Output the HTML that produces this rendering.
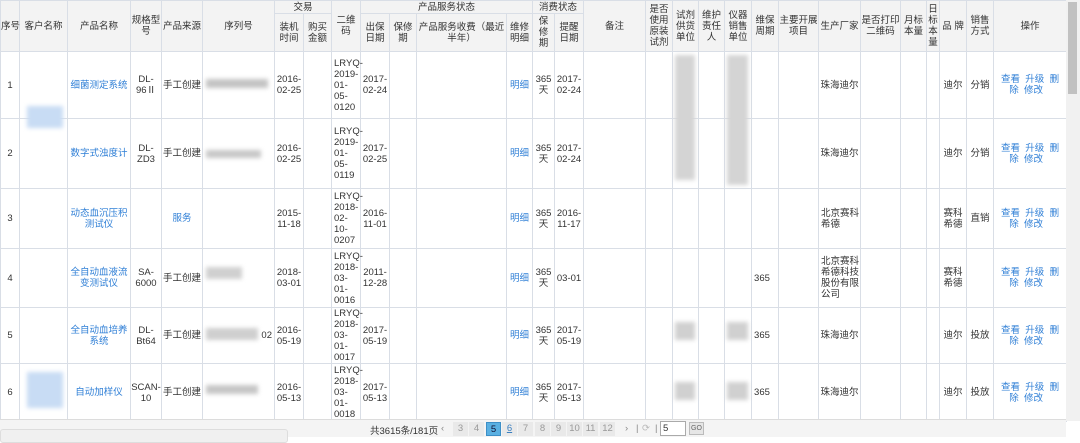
<!DOCTYPE html>
<html><head><meta charset="utf-8"><style>
*{margin:0;padding:0;box-sizing:border-box}
body{width:1080px;height:443px;overflow:hidden;background:#fff;font-family:"Liberation Sans","Noto Sans CJK SC",sans-serif;font-size:9.5px;color:#333;position:relative}
table{position:absolute;left:0;top:0;border-collapse:collapse;table-layout:fixed;width:1066px}
td,th{border:1px solid #d9dee6;text-align:center;vertical-align:middle;font-weight:normal;line-height:11px;padding:0;white-space:nowrap;font-size:9.5px}
th{background:#f3f3f3;color:#333}
td.l{text-align:left;padding-left:2px}
a{color:#2f7fd6;text-decoration:none}
.b{position:absolute;filter:blur(2px)}
.sb{position:absolute;left:1066px;top:0;width:14px;height:421px;background:#f1f1f1}
.sb i{position:absolute;left:2px;top:2px;width:9px;height:92px;background:#c1c1c1}
.pg{position:absolute;left:0;top:419px;width:1066px;height:18px;background:#f4f4f4;border-top:1px solid #dcdcdc}
.pg span{position:absolute;top:3px;font-size:9.5px;color:#333}
.pg .n{width:15px;height:14px;top:2px;background:#e9e9e9;color:#999;text-align:center;line-height:14px}
.pg .c{background:#5ab0e2;color:#113;border:1px solid #3d8fc7}
.bot{position:absolute;left:0;top:429px;width:288px;height:14px;background:#f0f0f0;border:1px solid #ddd;border-radius:3px}
</style></head><body>
<table>
<colgroup>
<col style="width:19px"><col style="width:48px"><col style="width:63px"><col style="width:31px"><col style="width:41px"><col style="width:72px"><col style="width:29px"><col style="width:28px"><col style="width:29px"><col style="width:29px"><col style="width:27px"><col style="width:90px"><col style="width:26px"><col style="width:22px"><col style="width:29px"><col style="width:62px"><col style="width:27px"><col style="width:26px"><col style="width:26px"><col style="width:27px"><col style="width:27px"><col style="width:40px"><col style="width:42px"><col style="width:40px"><col style="width:26px"><col style="width:13px"><col style="width:27px"><col style="width:27px"><col style="width:73px">
</colgroup>
<tr style="height:13px">
<th rowspan="2">序号</th><th rowspan="2">客户名称</th><th rowspan="2">产品名称</th><th rowspan="2">规格型<br>号</th><th rowspan="2">产品来源</th><th rowspan="2">序列号</th>
<th colspan="2">交易</th><th rowspan="2">二维<br>码</th><th colspan="4">产品服务状态</th><th colspan="2">消费状态</th>
<th rowspan="2">备注</th><th rowspan="2">是否<br>使用<br>原装<br>试剂</th><th rowspan="2">试剂<br>供货<br>单位</th><th rowspan="2">维护<br>责任<br>人</th><th rowspan="2">仪器<br>销售<br>单位</th><th rowspan="2">维保<br>周期</th><th rowspan="2">主要开展<br>项目</th><th rowspan="2">生产厂家</th><th rowspan="2">是否打印<br>二维码</th><th rowspan="2">月标<br>本量</th><th rowspan="2">日<br>标<br>本<br>量</th><th rowspan="2">品 牌</th><th rowspan="2">销售<br>方式</th><th rowspan="2">操作</th>
</tr>
<tr style="height:38px">
<th>装机<br>时间</th><th>购买<br>金额</th><th>出保<br>日期</th><th>保修<br>期</th><th>产品服务收费（最近<br>半年）</th><th>维修<br>明细</th><th>保<br>修<br>期</th><th>提醒<br>日期</th>
</tr>
<tr style="height:67px"><td>1</td><td></td><td><a>细菌测定系统</a></td><td>DL-<br>96Ⅱ</td><td>手工创建</td><td></td><td>2016-<br>02-25</td><td></td><td class="l">LRYQ-<br>2019-<br>01-<br>05-<br>0120</td><td>2017-<br>02-24</td><td></td><td></td><td><a>明细</a></td><td>365<br>天</td><td>2017-<br>02-24</td><td></td><td></td><td></td><td></td><td></td><td></td><td></td><td>珠海迪尔</td><td></td><td></td><td></td><td>迪尔</td><td>分销</td><td><a>查看 &nbsp;升级 &nbsp;删<br>除 &nbsp;修改&nbsp;&nbsp;&nbsp;</a></td></tr>
<tr style="height:70px"><td>2</td><td></td><td><a>数字式浊度计</a></td><td>DL-<br>ZD3</td><td>手工创建</td><td></td><td>2016-<br>02-25</td><td></td><td class="l">LRYQ-<br>2019-<br>01-<br>05-<br>0119</td><td>2017-<br>02-25</td><td></td><td></td><td><a>明细</a></td><td>365<br>天</td><td>2017-<br>02-24</td><td></td><td></td><td></td><td></td><td></td><td></td><td></td><td>珠海迪尔</td><td></td><td></td><td></td><td>迪尔</td><td>分销</td><td><a>查看 &nbsp;升级 &nbsp;删<br>除 &nbsp;修改&nbsp;&nbsp;&nbsp;</a></td></tr>
<tr style="height:60px"><td>3</td><td></td><td><a>动态血沉压积<br>测试仪</a></td><td></td><td><a>服务</a></td><td></td><td>2015-<br>11-18</td><td></td><td class="l">LRYQ-<br>2018-<br>02-<br>10-<br>0207</td><td>2016-<br>11-01</td><td></td><td></td><td><a>明细</a></td><td>365<br>天</td><td>2016-<br>11-17</td><td></td><td></td><td></td><td></td><td></td><td></td><td></td><td class="l">北京赛科<br>希德</td><td></td><td></td><td></td><td>赛科<br>希德</td><td>直销</td><td><a>查看 &nbsp;升级 &nbsp;删<br>除 &nbsp;修改&nbsp;&nbsp;&nbsp;</a></td></tr>
<tr style="height:59px"><td>4</td><td></td><td><a>全自动血液流<br>变测试仪</a></td><td>SA-<br>6000</td><td>手工创建</td><td></td><td>2018-<br>03-01</td><td></td><td class="l">LRYQ-<br>2018-<br>03-<br>01-<br>0016</td><td>2011-<br>12-28</td><td></td><td></td><td><a>明细</a></td><td>365<br>天</td><td>03-01</td><td></td><td></td><td></td><td></td><td></td><td class="l">365</td><td></td><td class="l">北京赛科<br>希德科技<br>股份有限<br>公司</td><td></td><td></td><td></td><td>赛科<br>希德</td><td></td><td><a>查看 &nbsp;升级 &nbsp;删<br>除 &nbsp;修改&nbsp;&nbsp;&nbsp;</a></td></tr>
<tr style="height:56px"><td>5</td><td></td><td><a>全自动血培养<br>系统</a></td><td>DL-<br>Bt64</td><td>手工创建</td><td style="text-align:right;padding-right:2px">02</td><td>2016-<br>05-19</td><td></td><td class="l">LRYQ-<br>2018-<br>03-<br>01-<br>0017</td><td>2017-<br>05-19</td><td></td><td></td><td><a>明细</a></td><td>365<br>天</td><td>2017-<br>05-19</td><td></td><td></td><td></td><td></td><td></td><td class="l">365</td><td></td><td>珠海迪尔</td><td></td><td></td><td></td><td>迪尔</td><td>投放</td><td><a>查看 &nbsp;升级 &nbsp;删<br>除 &nbsp;修改&nbsp;&nbsp;&nbsp;</a></td></tr>
<tr style="height:58px"><td>6</td><td></td><td><a>自动加样仪</a></td><td>SCAN-<br>10</td><td>手工创建</td><td></td><td>2016-<br>05-13</td><td></td><td class="l">LRYQ-<br>2018-<br>03-<br>01-<br>0018</td><td>2017-<br>05-13</td><td></td><td></td><td><a>明细</a></td><td>365<br>天</td><td>2017-<br>05-13</td><td></td><td></td><td></td><td></td><td></td><td class="l">365</td><td></td><td>珠海迪尔</td><td></td><td></td><td></td><td>迪尔</td><td>投放</td><td><a>查看 &nbsp;升级 &nbsp;删<br>除 &nbsp;修改&nbsp;&nbsp;&nbsp;</a></td></tr>
</table>
<div class="b" style="left:27px;top:106px;width:36px;height:22px;background:#c8dcf4"></div>
<div class="b" style="left:27px;top:372px;width:36px;height:36px;background:#c8dcf4"></div>
<div class="b" style="left:206px;top:79px;width:62px;height:9px;background:#c4c4c4"></div>
<div class="b" style="left:206px;top:150px;width:55px;height:8px;background:#c8c8c8"></div>
<div class="b" style="left:206px;top:267px;width:36px;height:12px;background:#d0d0d0"></div>
<div class="b" style="left:206px;top:328px;width:52px;height:12px;background:#cfcfcf"></div>
<div class="b" style="left:206px;top:385px;width:52px;height:9px;background:#c6c6c6"></div>
<div class="b" style="left:675px;top:55px;width:20px;height:125px;background:#d4d4d4"></div>
<div class="b" style="left:727px;top:55px;width:21px;height:130px;background:#d4d4d4"></div>
<div class="b" style="left:675px;top:322px;width:20px;height:18px;background:#d0d0d0"></div>
<div class="b" style="left:727px;top:322px;width:21px;height:18px;background:#d0d0d0"></div>
<div class="b" style="left:675px;top:382px;width:20px;height:18px;background:#d0d0d0"></div>
<div class="b" style="left:727px;top:382px;width:21px;height:18px;background:#d0d0d0"></div>
<div class="sb"><i></i></div>
<div class="pg">
<span style="left:370px">共3615条/181页</span>
<span style="left:441px;color:#888">‹</span>
<span class="n" style="left:453px">3</span><span class="n" style="left:469px">4</span><span class="n c" style="left:486px">5</span><span class="n" style="left:502px;color:#3a7fc0;text-decoration:underline">6</span><span class="n" style="left:518px">7</span><span class="n" style="left:535px">8</span><span class="n" style="left:551px">9</span><span class="n" style="left:567px">10</span><span class="n" style="left:583px">11</span><span class="n" style="left:600px">12</span>
<span style="left:625px;color:#888">›</span><span style="left:636px;color:#888">|</span><span style="left:642px;color:#bbb">⟳</span><span style="left:655px;color:#888">|</span>
<span style="left:660px;top:1px;width:26px;height:15px;background:#fff;border:1px solid #aaa;padding-left:2px;line-height:13px">5</span>
<span style="left:689px;top:2px;width:15px;height:13px;background:#e6e6e6;border:1px solid #bbb;font-size:7px;text-align:center;line-height:11px;color:#666">GO</span>
</div>
<div class="bot"></div>
</body></html>
